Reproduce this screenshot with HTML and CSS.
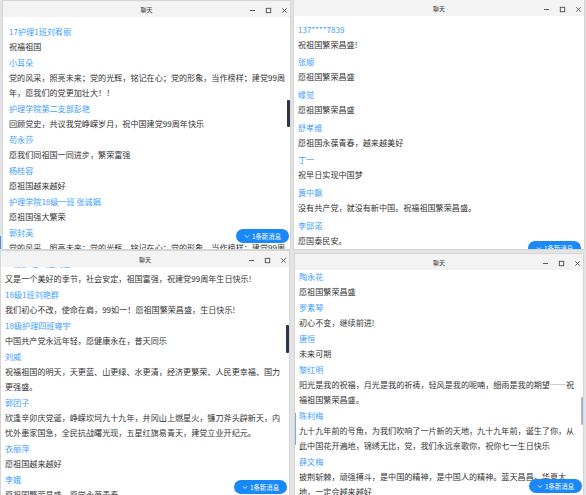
FILE: index.html
```html
<!DOCTYPE html>
<html lang="zh-CN">
<head>
<meta charset="utf-8">
<title>聊天</title>
<link rel="stylesheet" href="styles.css">
</head>
<body>
<div class="desktop">
  <div class="accent-a"></div>

  <section class="win win-a">
    <header class="titlebar">
      <span class="title">聊天</span>
      <div class="controls">
        <svg viewBox="0 0 9 9"><line x1="2" y1="4.5" x2="7" y2="4.5"/></svg>
        <svg viewBox="0 0 9 9"><rect x="2.3" y="2.3" width="4.4" height="4.4"/></svg>
        <svg viewBox="0 0 9 9"><path d="M2.3 2.3 6.7 6.7 M6.7 2.3 2.3 6.7"/></svg>
      </div>
    </header>
    <div class="body">
      <ul class="msgs">
        <li><div class="name">17护理1班刘宥丽</div><div class="text">祝福祖国</div></li>
        <li><div class="name">小耳朵</div><div class="text">党的风采，照亮未来；党的光辉，铭记在心；党的形象，当作榜样；建党99周年，愿我们的党更加壮大！！</div></li>
        <li><div class="name">护理学院第二支部彭艳</div><div class="text">回顾党史，共议我党峥嵘岁月，祝中国建党99周年快乐</div></li>
        <li><div class="name">苟永莎</div><div class="text">愿我们同祖国一同进步，繁荣富强</div></li>
        <li><div class="name">杨桂容</div><div class="text">愿祖国越来越好</div></li>
        <li><div class="name">护理学院18级一班 张诚娟</div><div class="text">愿祖国强大繁荣</div></li>
        <li><div class="name">郭封英</div><div class="text">党的风采，照亮未来；党的光辉，铭记在心；党的形象，当作榜样；建党99周年，愿我们的党更加壮大！！</div></li>
      </ul>
      <div class="thumb"></div>
      <button class="newmsg"><svg viewBox="0 0 6 5"><polyline points="1,1.3 3,3.5 5,1.3"/></svg>1条新消息</button>
    </div>
  </section>

  <section class="win win-b">
    <header class="titlebar">
      <span class="title">聊天</span>
      <div class="controls">
        <svg viewBox="0 0 9 9"><line x1="2" y1="4.5" x2="7" y2="4.5"/></svg>
        <svg viewBox="0 0 9 9"><rect x="2.3" y="2.3" width="4.4" height="4.4"/></svg>
        <svg viewBox="0 0 9 9"><path d="M2.3 2.3 6.7 6.7 M6.7 2.3 2.3 6.7"/></svg>
      </div>
    </header>
    <div class="body">
      <ul class="msgs">
        <li><div class="name">137****7839</div><div class="text">祝祖国繁荣昌盛!</div></li>
        <li><div class="name">张顺</div><div class="text">愿祖国繁荣昌盛</div></li>
        <li><div class="name">缘觉</div><div class="text">愿祖国繁荣昌盛</div></li>
        <li><div class="name">舒孝维</div><div class="text">愿祖国永葆青春，越来越美好</div></li>
        <li><div class="name">丁一</div><div class="text">祝早日实现中国梦</div></li>
        <li><div class="name">黄中飘</div><div class="text">没有共产党，就没有新中国。祝福祖国繁荣昌盛。</div></li>
        <li><div class="name">李邱诺</div><div class="text">愿国泰民安。</div></li>
      </ul>
      <button class="newmsg"><svg viewBox="0 0 6 5"><polyline points="1,1.3 3,3.5 5,1.3"/></svg>1条新消息</button>
    </div>
  </section>

  <section class="win win-c">
    <header class="titlebar">
      <span class="title">聊天</span>
      <div class="controls">
        <svg viewBox="0 0 9 9"><line x1="2" y1="4.5" x2="7" y2="4.5"/></svg>
        <svg viewBox="0 0 9 9"><rect x="2.3" y="2.3" width="4.4" height="4.4"/></svg>
        <svg viewBox="0 0 9 9"><path d="M2.3 2.3 6.7 6.7 M6.7 2.3 2.3 6.7"/></svg>
      </div>
    </header>
    <div class="body">
      <ul class="msgs">
        <li><div class="name">17级护理一班刘佳</div><div class="text">又是一个美好的季节，社会安定，祖国富强，祝建党99周年生日快乐!</div></li>
        <li><div class="name">18级1班刘艳群</div><div class="text">我们初心不改，使命在肩，99如一！愿祖国繁荣昌盛，生日快乐!</div></li>
        <li><div class="name">18级护理四班雍宇</div><div class="text">中国共产党永远年轻，愿健康永在，普天同乐</div></li>
        <li><div class="name">刘威</div><div class="text">祝福祖国的明天，天更蓝、山更绿、水更清，经济更繁荣、人民更幸福、国力更强盛。</div></li>
        <li><div class="name">郭团子</div><div class="text">欣逢辛卯庆党诞，峥嵘坎坷九十九年，井冈山上燃星火，镰刀斧头辟新天，内忧外患家国急，全民抗战曙光现，五星红旗易青天，建党立业开纪元。</div></li>
        <li><div class="name">衣丽萍</div><div class="text">愿祖国越来越好</div></li>
        <li><div class="name">李娥</div><div class="text">愿祖国繁荣昌盛，愿党永葆青春</div></li>
      </ul>
      <div class="thumb"></div>
      <button class="newmsg"><svg viewBox="0 0 6 5"><polyline points="1,1.3 3,3.5 5,1.3"/></svg>1条新消息</button>
    </div>
  </section>

  <section class="win win-d">
    <header class="titlebar">
      <span class="title">聊天</span>
      <div class="controls">
        <svg viewBox="0 0 9 9"><line x1="2" y1="4.5" x2="7" y2="4.5"/></svg>
        <svg viewBox="0 0 9 9"><rect x="2.3" y="2.3" width="4.4" height="4.4"/></svg>
        <svg viewBox="0 0 9 9"><path d="M2.3 2.3 6.7 6.7 M6.7 2.3 2.3 6.7"/></svg>
      </div>
    </header>
    <div class="body">
      <ul class="msgs">
        <li><div class="name">陶永花</div><div class="text">愿祖国繁荣昌盛</div></li>
        <li><div class="name">罗素琴</div><div class="text">初心不变，继续前进!</div></li>
        <li><div class="name">唐恒</div><div class="text">未来可期</div></li>
        <li><div class="name">黎红明</div><div class="text">阳光是我的祝福，月光是我的祈祷，轻风是我的呢喃，细雨是我的期望——祝福祖国繁荣昌盛。</div></li>
        <li><div class="name">陈利梅</div><div class="text">九十九年前的号角，为我们吹响了一片新的天地，九十九年前，诞生了你，从此中国花开遍地，锦绣无比，党，我们永远亲歌你，祝你七一生日快乐</div></li>
        <li><div class="name">薛文梅</div><div class="text">披荆斩棘，顽强搏斗，是中国的精神，是中国人的精神。蓝天昌昌，华夏大地，一定会越来越好</div></li>
      </ul>
      <div class="edge"></div>
      <div class="thumb"></div>
      <button class="newmsg"><svg viewBox="0 0 6 5"><polyline points="1,1.3 3,3.5 5,1.3"/></svg>1条新消息</button>
    </div>
  </section>
</div>
</body>
</html>
```

FILE: styles.css
```css
* {
  box-sizing: border-box;
  margin: 0;
  padding: 0;
}

html,
body {
  width: 586px;
  height: 495px;
  overflow: hidden;
}

body {
  background: #e3e3e3;
  font-family: "Noto Sans CJK SC", "Microsoft YaHei", sans-serif;
}

.desktop {
  position: relative;
  width: 586px;
  height: 495px;
}

.accent-a {
  position: absolute;
  left: 0;
  top: 236px;
  width: 1px;
  height: 13px;
  background: #3f8ef5;
}

/* windows on the desktop */
.win {
  position: absolute;
  display: flex;
  flex-direction: column;
  background: #fff;
  border: 1px solid #d5d5d5;
  overflow: hidden;
}

.win-a { left: 2px;   top: 0;      width: 289px; height: 250px; }
.win-b { left: 293px; top: -1px;   width: 292px; height: 251px; }
.win-c { left: 0;     top: 250px;  width: 290px; height: 250px; }
.win-d { left: 294px; top: 253px;  width: 290px; height: 246px; }

.titlebar {
  flex: none;
  height: 16px;
  background: #f3f3f3;
  display: grid;
  grid-template-columns: 1fr auto 1fr;
  align-items: center;
}

.title {
  grid-column: 2;
  font-size: 6px;
  line-height: 16px;
  color: #333;
  padding-top: 1px;
}

.controls {
  grid-column: 3;
  justify-self: end;
  display: flex;
  gap: 7px;
  padding-right: 1.5px;
  padding-top: 1px;
}

.controls svg {
  display: block;
  width: 9px;
  height: 9px;
  fill: none;
  stroke: #4a4a4a;
  stroke-width: 0.9;
}

.body {
  flex: 1;
  position: relative;
  overflow: hidden;
}

.msgs {
  list-style: none;
  font-size: 8.1px;
}

.name {
  color: #409eff;
  line-height: 14px;
  margin-top: 2px;
  white-space: nowrap;
}

.text {
  color: #333;
  line-height: 15px;
}

.win-a .msgs { padding: 6px 2px 0 6px; }
.win-b .msgs { padding: 4px 4px 0 4px; }
.win-c .msgs { padding: 0 6px 0 4px; margin-top: -12px; }
.win-d .msgs { padding: 0 6px 0 4px; margin-top: -2px; }

.win-b .name { line-height: 15px; margin-top: 1.7px; }
.win-b .text { line-height: 16px; }

/* overlay scrollbar thumbs */
.thumb {
  position: absolute;
  right: 0;
  width: 3px;
  height: 27px;
  border-radius: 1px;
  background: #2f3647;
}

.win-a .thumb { top: 83px; }
.win-c .thumb { top: 58px; height: 28px; }
.win-d .thumb { top: 127px; height: 28px; width: 2px; background: #9fb6d6; }

.edge {
  position: absolute;
  left: 0;
  top: 143px;
  width: 1px;
  height: 32px;
  background: #78aef0;
}

/* floating "new message" pill */
.newmsg {
  position: absolute;
  height: 14px;
  width: 53px;
  border: 0;
  border-radius: 7px;
  background: #1989fa;
  color: #fff;
  font-family: inherit;
  font-size: 6.4px;
  display: flex;
  align-items: center;
  justify-content: center;
  gap: 2px;
}

.newmsg svg {
  width: 6px;
  height: 5px;
  fill: none;
  stroke: #fff;
  stroke-width: 0.8;
}

.win-a .newmsg { right: 1px; bottom: 6px; }
.win-b .newmsg { right: 3px; bottom: -6px; }
.win-c .newmsg { right: 2px; bottom: 5px; }
.win-d .newmsg { right: 1px; bottom: 5px; }
```
